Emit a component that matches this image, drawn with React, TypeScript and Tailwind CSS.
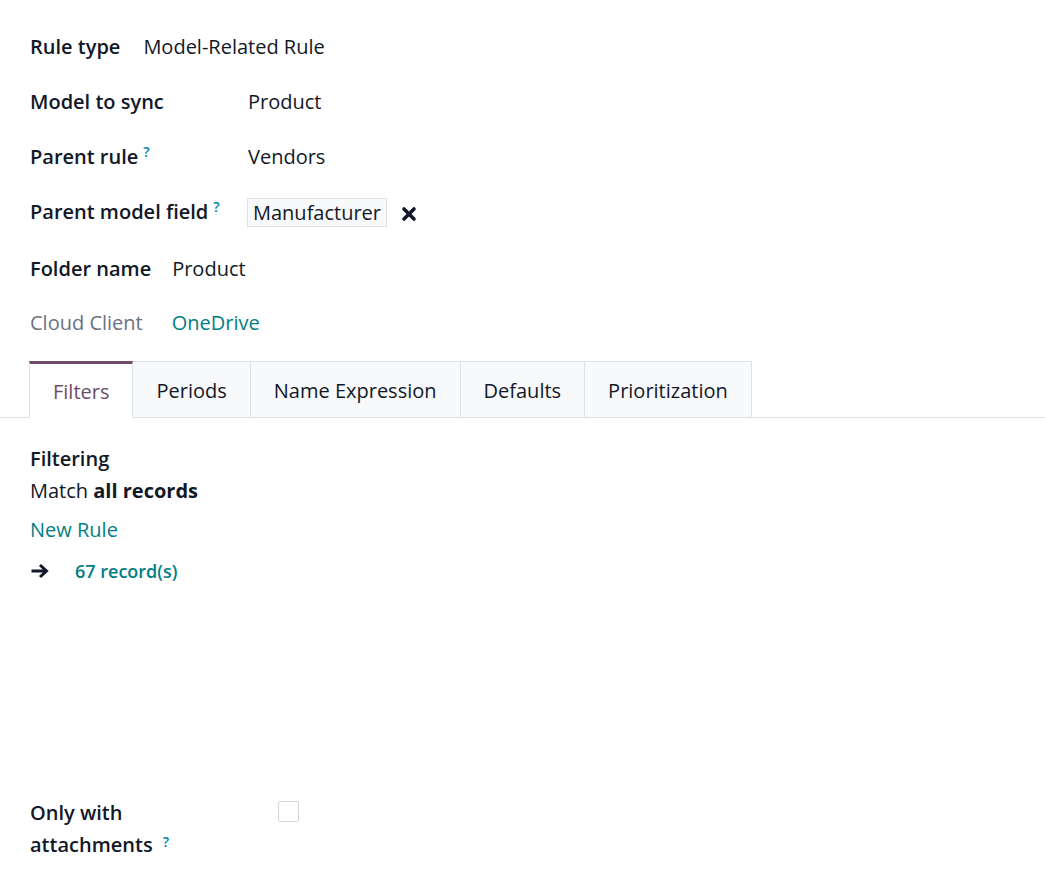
import React from "react";

const Help = () => (
  <sup className="ml-[5px] text-[14px] font-semibold text-[#0180a5] relative -top-[5px]">?</sup>
);

const tabs = ["Filters", "Periods", "Name Expression", "Defaults", "Prioritization"];

const App = () => {
  return (
    <div
      className="w-[1045px] h-[878px] bg-white text-[#111827] text-[20px]"
      style={{ fontFamily: '"Open Sans", "Noto Sans", sans-serif' }}
    >
      <div className="flex flex-col px-[30px] pt-[31px]">
        <div className="flex items-center h-[32px] gap-x-[23px]">
          <span className="font-semibold">Rule type</span>
          <span>Model-Related Rule</span>
        </div>

        <div className="grid grid-cols-[218px_1fr] items-center mt-[23px] gap-y-[23px]">
          <span className="font-semibold h-[32px] flex items-center">Model to sync</span>
          <span className="h-[32px] flex items-center">Product</span>

          <span className="font-semibold h-[32px] flex items-center">
            Parent rule <Help />
          </span>
          <span className="h-[32px] flex items-center">Vendors</span>

          <span className="font-semibold h-[32px] flex items-center">
            Parent model field <Help />
          </span>
          <div className="h-[32px] flex items-center gap-x-[14px] -ml-px">
            <span className="border border-[#dee2e6] bg-[#f8f9fa] px-[5px] leading-[27px]">
              Manufacturer
            </span>
            <svg width="16" height="16" viewBox="0 0 16 16" className="mt-[3px]">
              <path d="M3 3 L13 13 M13 3 L3 13" stroke="#111827" strokeWidth="3.6" strokeLinecap="round" />
            </svg>
          </div>
        </div>

        <div className="flex items-center h-[32px] gap-x-[21px] mt-[25px]">
          <span className="font-semibold">Folder name</span>
          <span>Product</span>
        </div>

        <div className="flex items-center h-[32px] gap-x-[29px] mt-[22px]">
          <span className="text-[#6b7280]">Cloud Client</span>
          <span className="text-[#017e84]">OneDrive</span>
        </div>
      </div>

      {/* notebook tabs */}
      <div className="flex mt-[22px] pl-[29px] border-b border-[#dee2e6]">
        {tabs.map((t, i) =>
          i === 0 ? (
            <div
              key={t}
              className="h-[57px] px-[23px] flex items-center bg-white border-x border-[#dee2e6] border-t-[3px] border-t-[#714b67] -mb-px text-[#714b67] pt-[1px]"
            >
              {t}
            </div>
          ) : (
            <div
              key={t}
              className="h-[56px] px-[23px] flex items-center bg-[#f8f9fa] border-t border-r border-[#dee2e6] pt-[2px]"
            >
              {t}
            </div>
          )
        )}
      </div>

      <div className="flex flex-col px-[30px] pt-[27px]">
        <span className="font-semibold leading-[28px]">Filtering</span>
        <span className="leading-[28px] mt-[4px]">
          Match <b className="font-bold">all records</b>
        </span>
        <span className="text-[#017e84] leading-[28px] mt-[11px]">New Rule</span>
        <div className="flex items-center mt-[13px] gap-x-[26px] leading-[28px]">
          <svg width="19" height="16" viewBox="0 0 19 16">
            <path d="M1.5 8 H16 M10 2 L16.5 8 L10 14" stroke="#111827" strokeWidth="3" fill="none" strokeLinejoin="miter" />
          </svg>
          <span className="text-[18px] font-semibold text-[#017e84]">67 record(s)</span>
        </div>

        <div className="grid grid-cols-[248px_1fr] mt-[212px]">
          <span className="font-semibold leading-[32px]">
            Only with
            <br />
            attachments <Help />
          </span>
          <div className="pt-[4px]">
            <div className="w-[21px] h-[21px] border border-[#d1d5db] rounded-[2px] bg-white" />
          </div>
        </div>
      </div>
    </div>
  );
};

export default App;
